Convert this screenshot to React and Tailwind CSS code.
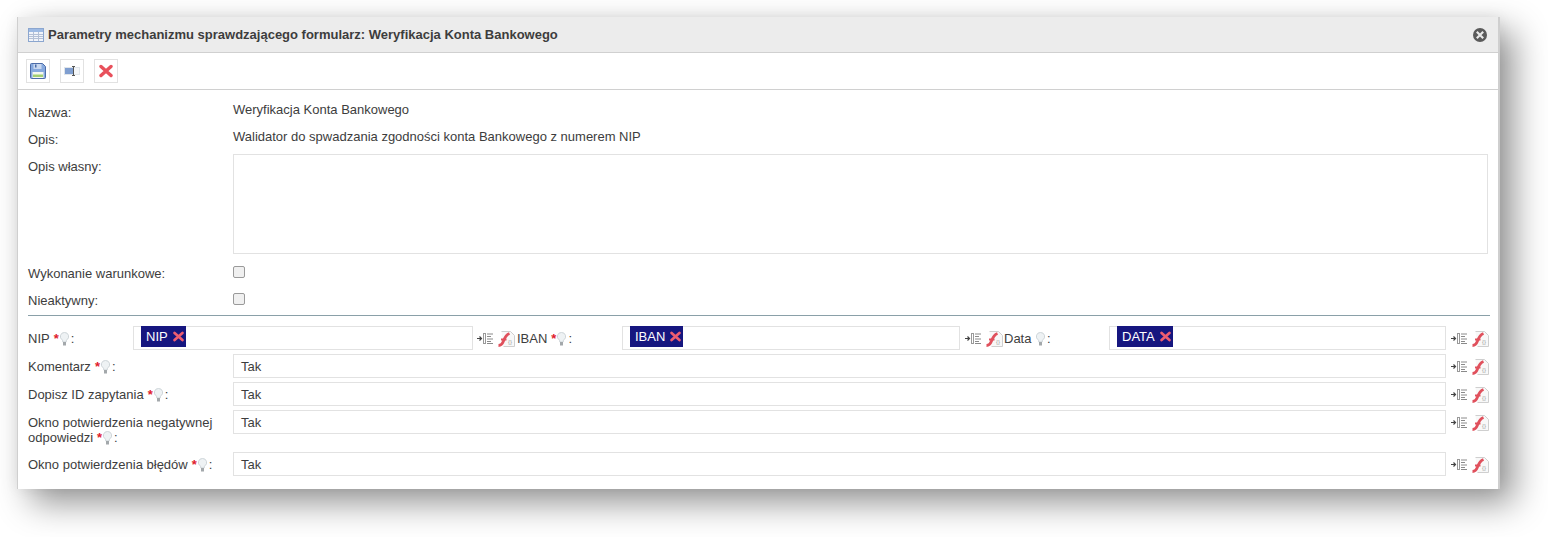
import React from "react";

const FONT = { fontFamily: '"Liberation Sans", Arial, sans-serif' };

const TableIcon = () => (
  <svg width="16" height="14" viewBox="0 0 16 14" className="shrink-0">
    <rect x="0.5" y="0.5" width="15" height="13" fill="#f1f4fa" stroke="#8ba6cf" />
    <rect x="1" y="1" width="14" height="3" fill="#9dbae4" />
    <path d="M1 6.500h14M1 8.500h14M1 10.500h14M5.500 4v9M10.500 4v9" stroke="#b4c0d6" strokeWidth="1" />
  </svg>
);

const SaveIcon = () => (
  <svg width="16" height="16" viewBox="0 0 16 16">
    <path d="M0.500 1.500a1 1 0 0 1 1-1h11l3 3v11a1 1 0 0 1-1 1h-13a1 1 0 0 1-1-1z" fill="#86a9de" stroke="#4c6ca8" />
    <rect x="3.500" y="1" width="8" height="5" fill="#c9d8ef" />
    <rect x="5" y="1.500" width="1.500" height="3" fill="#4a6ca8" />
    <rect x="2.500" y="9" width="11" height="6" fill="#f4f8f0" />
    <rect x="3" y="11.500" width="10" height="2.500" fill="#a2cf72" />
  </svg>
);

const RenameIcon = () => (
  <svg width="16" height="10" viewBox="0 0 16 10">
    <rect x="0.500" y="1.500" width="15" height="7" fill="#f4f6f8" stroke="#e0e5ea" />
    <rect x="1" y="2" width="8" height="6" fill="#7f9ed0" />
    <path d="M8 0.500h3M8 9.500h3M9.500 0.500v9" stroke="#555" strokeWidth="1" fill="none" />
  </svg>
);

const CrossIcon = ({ size = 14, color = "#e8505b" }) => (
  <svg width={size} height={size} viewBox="0 0 14 14">
    <path d="M2 2.500L12 11.500M12 2.500L2 11.500" stroke={color} strokeWidth="3.400" strokeLinecap="round" />
  </svg>
);

const CloseIcon = () => (
  <svg width="14" height="14" viewBox="0 0 14 14">
    <circle cx="7" cy="7" r="7" fill="#5a5a5a" />
    <path d="M3.800 3.800L10.200 10.200M10.200 3.800L3.800 10.200" stroke="#e8e8e8" strokeWidth="2.200" />
  </svg>
);

const Bulb = () => (
  <svg width="9" height="14" viewBox="0 0 9 14" className="inline-block align-[1px] -my-[4px] ml-[1px] mr-[2px]">
    <path d="M4.500 0.500a4 4 0 0 1 2.400 7.300c-.6.500-.7 1.200-.7 2.200h-3.400c0-1-.1-1.700-.7-2.200A4 4 0 0 1 4.500 .5z" fill="#eef2f4" stroke="#cdd4d8" />
    <rect x="3" y="10" width="3" height="3.500" fill="#a3a8ab" />
  </svg>
);

const MapIcon = () => (
  <svg width="17" height="13" viewBox="0 0 17 13" className="shrink-0 mt-[1px]">
    <path d="M0 6.500h4M2.500 4.500l2 2-2 2" stroke="#444" strokeWidth="1.200" fill="none" />
    <rect x="6.500" y="1.500" width="2" height="10" fill="#fff" stroke="#999" />
    <path d="M10 2h6M10 4.500h4M10 7h6M10 9.500h4M10 11.500h6" stroke="#8a8a8a" strokeWidth="1" />
  </svg>
);

const FlashIcon = () => (
  <svg width="17" height="16" viewBox="0 0 17 16" className="shrink-0">
    <path d="M3.500 .5h9l4 4v11h-11" fill="#f8f8f8" stroke="#cfcfcf" />
    <path d="M.5 14.500c2.500 0 4-1.800 5-4.500s2-6 6-7.500" stroke="#e0505c" strokeWidth="2.800" fill="none" />
    <path d="M3 8.500h5.500" stroke="#e0505c" strokeWidth="2" />
    <text x="10" y="13" fontSize="6" fill="#a0a0a0" style={FONT}>{"{}"}</text>
  </svg>
);

const ActionIcons = () => (
  <div className="flex items-start gap-[4px] pt-[5px]">
    <MapIcon />
    <FlashIcon />
  </div>
);

const Req = () => <span className="text-[#e0202c] font-bold ml-[4px]">*</span>;

const FieldLabel = ({ text, required = true }) => (
  <>
    {text}
    {required ? <Req /> : " "}
    <Bulb />:
  </>
);

const Tag = ({ text }) => (
  <span className="w-fit h-[21px] -mt-px bg-[#16167f] text-white pl-[5px] pr-[2px] flex items-center gap-[5px] leading-none text-[13px]">
    {text}
    <CrossIcon size={11} color="#ef5d70" />
  </span>
);

const TagInput = ({ text, width }) => (
  <div className={`${width} h-[24px] border border-[#e2e2e2] bg-white pl-[7px] shrink-0`}>
    <Tag text={text} />
  </div>
);

const TextRow = ({ label, rowHeight }) => (
  <div className={`flex ${rowHeight}`}>
    <div className="w-[205px] shrink-0 leading-[15px] pt-[5px]">{label}</div>
    <div className="w-[1213px] h-[24px] border border-[#e2e2e2] pl-[7px] leading-[23px] shrink-0">Tak</div>
    <div className="ml-[5px]">
      <ActionIcons />
    </div>
  </div>
);

export default function App() {
  return (
    <div className="w-[1548px] h-[537px] bg-white pt-[17px] pl-[17px] overflow-hidden text-[13px] text-[#3d3d3d]" style={FONT}>
      <div className="w-[1483px] h-[472px] bg-white border-l border-r-2 border-[#cfcfcf] shadow-[14px_14px_32px_rgba(0,0,0,0.42),0_0_14px_rgba(0,0,0,0.06)]">
        {/* Header */}
        <div className="h-[36px] bg-[#ececec] border-b border-[#d0d0d0] pl-[10px] pr-[11px] flex items-center gap-[4px] font-bold">
          <TableIcon />
          <span className="flex-1">Parametry mechanizmu sprawdzającego formularz: Weryfikacja Konta Bankowego</span>
          <CloseIcon />
        </div>

        {/* Toolbar */}
        <div className="h-[37px] border-b border-[#d0d0d0] pl-[8px] flex items-center gap-[10px]">
          <div className="w-[24px] h-[24px] border border-[#e2e2e2] flex items-center justify-center"><SaveIcon /></div>
          <div className="w-[24px] h-[24px] border border-[#e2e2e2] flex items-center justify-center"><RenameIcon /></div>
          <div className="w-[24px] h-[24px] border border-[#e2e2e2] flex items-center justify-center"><CrossIcon /></div>
        </div>

        {/* Form */}
        <div className="pl-[10px] pt-[10px]">
          <div className="flex h-[27px]">
            <div className="w-[205px] pt-[3px]">Nazwa:</div>
            <div>Weryfikacja Konta Bankowego</div>
          </div>
          <div className="flex h-[27px]">
            <div className="w-[205px] pt-[3px]">Opis:</div>
            <div>Walidator do spwadzania zgodności konta Bankowego z numerem NIP</div>
          </div>
          <div className="flex h-[112px]">
            <div className="w-[205px] pt-[3px]">Opis własny:</div>
            <div className="w-[1255px] h-[100px] border border-[#e2e2e2]"></div>
          </div>
          <div className="flex h-[27px]">
            <div className="w-[205px] leading-[15px]">Wykonanie warunkowe:</div>
            <div className="w-[12px] h-[12px] rounded-[2px] border border-[#9a9a9a] bg-[#f0f0f0]"></div>
          </div>
          <div className="flex h-[22px]">
            <div className="w-[205px] leading-[15px]">Nieaktywny:</div>
            <div className="w-[12px] h-[12px] rounded-[2px] border border-[#9a9a9a] bg-[#f0f0f0]"></div>
          </div>

          <div className="w-[1462px] border-t border-[#8aa0a8] mb-[10px]"></div>

          <div className="flex flex-col gap-[4px]">
            <div className="flex">
              <div className="w-[105px] shrink-0 pt-[5px] leading-[15px]"><FieldLabel text="NIP" /></div>
              <TagInput text="NIP" width="w-[340px]" />
              <div className="w-[44px] pl-[4px]"><ActionIcons /></div>
              <div className="w-[105px] shrink-0 pt-[5px] leading-[15px]"><FieldLabel text="IBAN" /></div>
              <TagInput text="IBAN" width="w-[338px]" />
              <div className="w-[44px] pl-[5px]"><ActionIcons /></div>
              <div className="w-[105px] shrink-0 pt-[5px] leading-[15px]"><FieldLabel text="Data" required={false} /></div>
              <TagInput text="DATA" width="w-[337px]" />
              <div className="pl-[5px]"><ActionIcons /></div>
            </div>
            <TextRow label={<FieldLabel text="Komentarz" />} />
            <TextRow label={<FieldLabel text="Dopisz ID zapytania" />} />
            <TextRow label={<FieldLabel text="Okno potwierdzenia negatywnej odpowiedzi" />} rowHeight="h-[38px]" />
            <TextRow label={<FieldLabel text="Okno potwierdzenia błędów" />} />
          </div>
        </div>
      </div>
    </div>
  );
}
